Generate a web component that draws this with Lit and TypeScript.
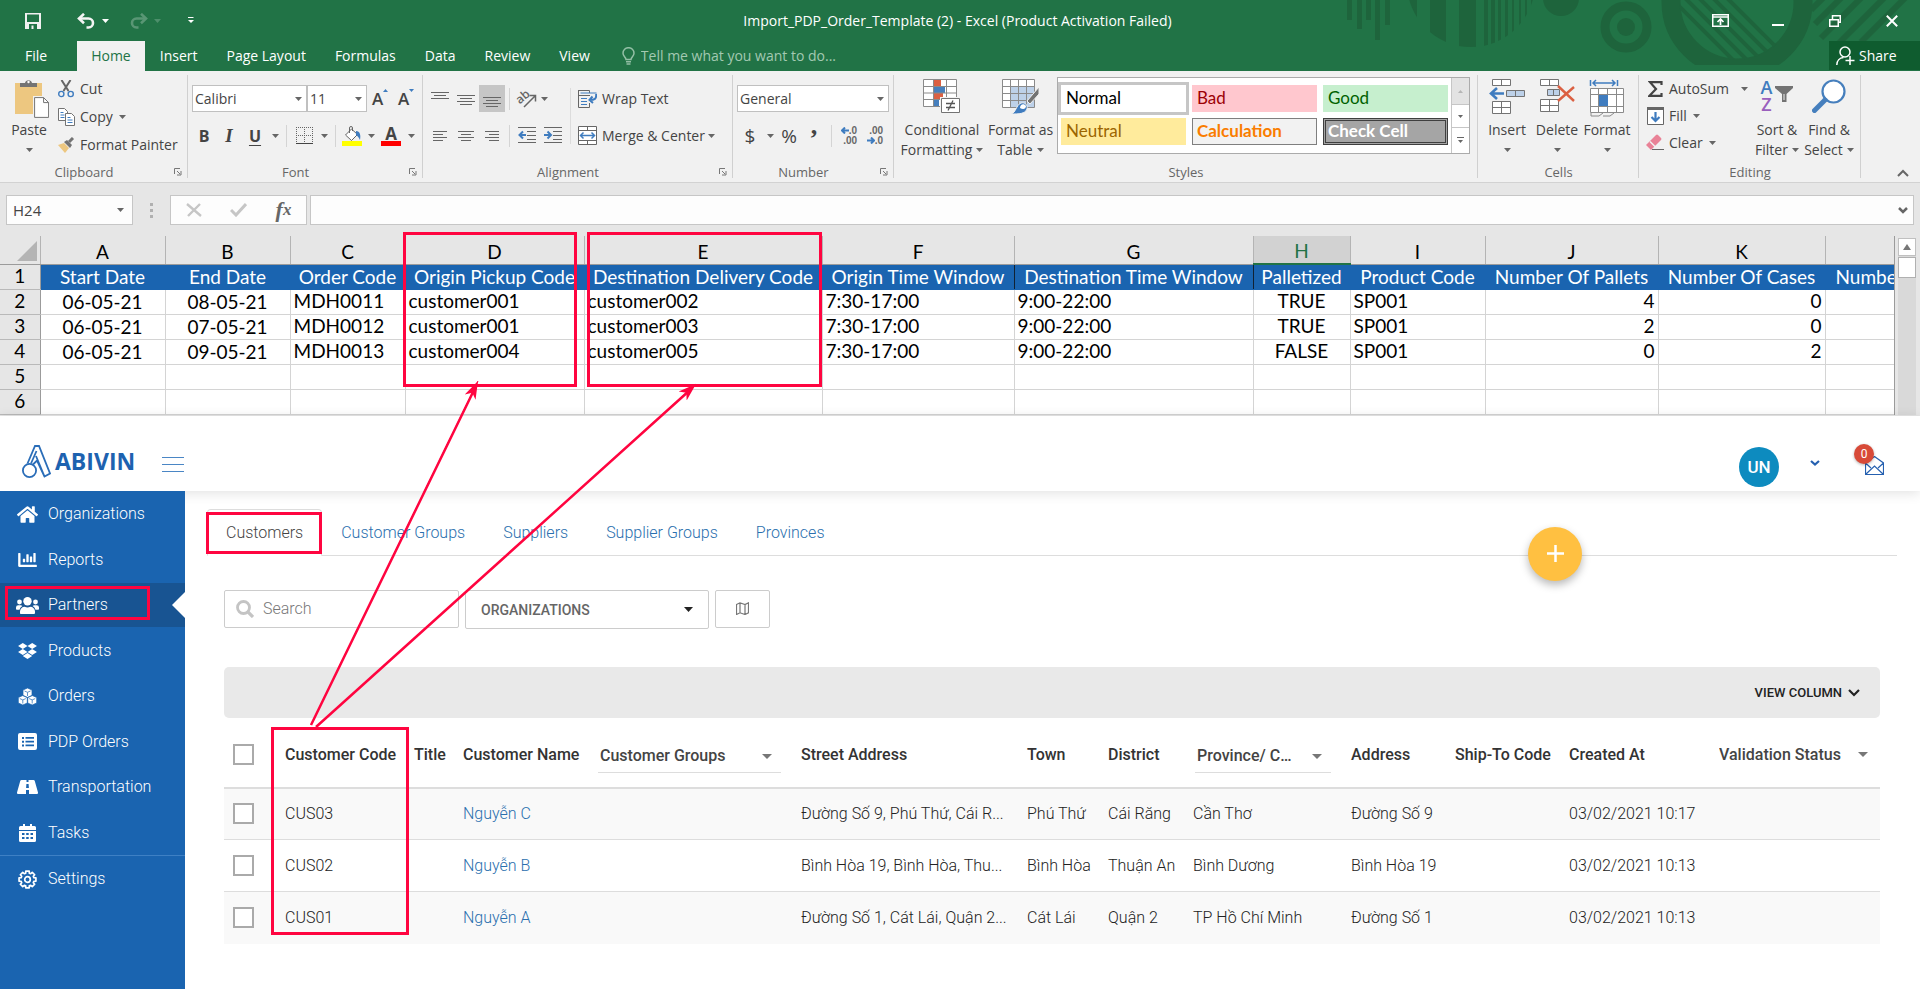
import { LitElement, html, css, svg, nothing } from "lit";
import { customElement } from "lit/decorators.js";
import { classMap } from "lit/directives/class-map.js";

/* ---------- shared pieces ---------- */

const reset = css`
  * { box-sizing: border-box; }
  button { border: 0; background: none; font: inherit; color: inherit; padding: 0; margin: 0; cursor: pointer; }
  input, select { font: inherit; color: inherit; margin: 0; }
  select { appearance: none; border-radius: 0; }
  ul { list-style: none; margin: 0; padding: 0; }
  a { color: inherit; text-decoration: none; }
  svg { display: block; flex: none; }
  table { border-collapse: collapse; border-spacing: 0; }
`;

const icon = (w: number, h: number, body: unknown, box = `0 0 ${w} ${h}`) =>
  html`<svg width=${w} height=${h} viewBox=${box} fill="none" aria-hidden="true">${body}</svg>`;

const caret = (color = "#666") =>
  icon(7, 4, svg`<path d="M0 0h7L3.5 4z" fill=${color} />`);

/* ---------- spreadsheet icons ---------- */

const lines = (rows: number[][]) =>
  svg`<path d=${rows.map(([x, y, w]) => `M${x} ${y}.5h${w}`).join("")} stroke="#666" />`;

const ic = {
  save: icon(16, 16, svg`<path d="M0 0h16v16H0z" fill="#f0f0f0"/><path d="M2 1.500h12v7.500h-12zM4 11h8v5H4z" fill="#217346"/><path d="M6.500 12.500h2V16h-2z" fill="#f0f0f0"/>`),
  undo: icon(19, 16, svg`<path d="M3 5.500h8.500a4.500 4.500 0 0 1 0 9h-2" stroke="#f4f4f4" stroke-width="2.600"/><path d="M7 .8 2 5.500l5 4.700" stroke="#f4f4f4" stroke-width="2.600"/>`),
  redo: icon(19, 16, svg`<g opacity=".25"><path d="M16 5.500H7.500a4.500 4.500 0 0 0 0 9h2" stroke="#fff" stroke-width="2.600"/><path d="m12 .8 5 4.700-5 4.700" stroke="#fff" stroke-width="2.600"/></g>`),
  custom: icon(7, 7, svg`<path d="M0 .5h5.500" stroke="#fff"/><path d="M0 3h6L3 6z" fill="#fff"/>`),
  ribbonOpt: icon(17, 13, svg`<path d="M.75.750h15.500v11.500H.750zM1 3h15" stroke="#fff" stroke-width="1.500"/><path d="M8.500 11V6M5.500 8l3-3 3 3" stroke="#fff" stroke-width="1.700"/>`),
  min: icon(12, 12, svg`<path d="M0 10h12" stroke="#fff" stroke-width="2"/>`),
  restore: icon(12, 12, svg`<path d="M.75 4.750h8.500v6.500H.750zM3.500 4.500V.750h7.750v6.500H9.500" stroke="#fff" stroke-width="1.500"/>`),
  close: icon(12, 12, svg`<path d="m.8.800 10.400 10.400M11.200.800.800 11.200" stroke="#fff" stroke-width="2"/>`),
  bulb: icon(13, 18, svg`<path d="M4 12.500c0-2-3-3.200-3-6.300a5.500 5.500 0 0 1 11 0c0 3.100-3 4.300-3 6.300z" stroke="#93bfa5" stroke-width="1.500"/><path d="M4 14.700h5M4.500 17h4" stroke="#93bfa5" stroke-width="1.500"/>`),
  share: icon(19, 20, svg`<circle cx="9" cy="6" r="5" stroke="#fff" stroke-width="1.500"/><path d="M.8 19c0-4.500 3-7.200 6.700-7.500M14 10v9M9.500 14.500h9" stroke="#fff" stroke-width="1.500"/>`),
  paste: icon(34, 39, svg`<path d="M0 4h27v31H0z" fill="#edc780"/><path d="M5 8V4h5a3.600 3.600 0 0 1 7 0h5v4z" fill="#737373"/><circle cx="13.500" cy="3" r="1.200" fill="#fff"/><path d="M18 17h17v22H18z" fill="#f1f1f1"/><path d="M19.600 18.600h9l5 5V38.400h-14z" fill="#fff" stroke="#737373"/><path d="M28.600 18.600v5h5" stroke="#737373"/>`),
  cut: icon(16, 18, svg`<path d="m3.500 0 7 11M12.500 0l-7 11" stroke="#666" stroke-width="2"/><circle cx="3.300" cy="14" r="2.600" stroke="#3f7cbf" stroke-width="1.400"/><circle cx="12.700" cy="14" r="2.600" stroke="#3f7cbf" stroke-width="1.400"/>`),
  copy: icon(17, 18, svg`<path d="M.5.500h6l3 3v9h-9z" fill="#fff" stroke="#737373"/><path d="M7.500 5.500h6l3 3v9h-9z" fill="#fff" stroke="#737373"/><path d="M2.500 4.500h3M2.500 7h4M2.500 9.500h4M9.500 9.500h3M9.500 12h5M9.500 14.500h5" stroke="#3f7cbf"/>`),
  brush: icon(17, 16, svg`<path d="m0 8 6-2 5 5-4 5z" fill="#edc780"/><path d="m6 5 3-2 5 5-2 3z" fill="#737373"/><path d="m11 5 4-4" stroke="#737373" stroke-width="3"/>`),
  launch: icon(8, 8, svg`<path d="M.5 6V.500H6" stroke="#777"/><path d="M3 3l3 3M7 3v4H3" stroke="#777"/>`),
  growTip: icon(5, 4, svg`<path d="M0 3h5L2.500 0z" fill="#3f7cbf"/>`),
  shrinkTip: icon(5, 4, svg`<path d="M0 0h5L2.500 3z" fill="#3f7cbf"/>`),
  borders: icon(17, 17, svg`<path d="M.5 0v16M8.500 0v16M16.500 0v16M0 .500h17M0 8.500h17" stroke="#666" stroke-dasharray="1 1"/><path d="M0 16.500h17" stroke="#444"/>`),
  fill: icon(20, 20, svg`<path d="m3.500 9 6-6 6 5.500-6 6z" fill="#fff" stroke="#666"/><path d="M7.500 7V2a1.500 1.500 0 0 1 3 0v3" stroke="#666"/><path d="M14 5c4 0 5 4 4 9-1-2-2-4-4-5z" fill="#3f7cbf"/><path d="M0 15h20v5H0z" fill="#ff0"/>`),
  alignTop: icon(18, 18, lines([[0, 2, 18], [3, 5, 12], [0, 8, 18]])),
  alignMid: icon(18, 18, lines([[0, 5, 18], [3, 8, 12], [0, 11, 18], [3, 14, 12]])),
  alignBot: icon(18, 18, lines([[0, 7, 18], [3, 10, 12], [0, 13, 18], [3, 16, 12]])),
  left: icon(14, 12, lines([[0, 1, 14], [0, 4, 10], [0, 7, 14], [0, 10, 10]])),
  center: icon(16, 12, lines([[0, 1, 16], [3, 4, 10], [0, 7, 16], [3, 10, 10]])),
  right: icon(14, 12, lines([[0, 1, 14], [4, 4, 10], [0, 7, 14], [4, 10, 10]])),
  outdent: icon(18, 17, svg`${lines([[0, 0, 18], [9, 4, 9], [9, 8, 9], [9, 12, 9], [0, 15, 18]])}<path d="M8 8H2M5 4.500 1.500 8 5 11.500" stroke="#3f7cbf" stroke-width="2"/>`),
  indent: icon(18, 17, svg`${lines([[0, 0, 18], [9, 4, 9], [9, 8, 9], [9, 12, 9], [0, 15, 18]])}<path d="M0 8h6M3.500 4.500 7 8l-3.500 3.500" stroke="#3f7cbf" stroke-width="2"/>`),
  wrap: icon(19, 18, svg`<path d="M.5 0v17.500h11V13M.5.500h11V3M0 5.500h12" stroke="#666"/><path d="M2.500 3h16M3 8.500h6M3 11.500h6M3 14.500h6" stroke="#3f7cbf"/><path d="M18 4c1 5-2 6-6 6M14.500 6.500 11.500 10l3.500 3" stroke="#3f7cbf" stroke-width="2"/>`),
  merge: icon(19, 19, svg`<path d="M.5.500h18v18H.500zM.5 4.500h18M.5 14.500h18M9.500.500v4M9.500 14.500v4" stroke="#666" fill="#fff"/><path d="M3 9.500h13M5.500 6.500l-3 3 3 3M13.500 6.500l3 3-3 3" stroke="#3f7cbf" stroke-width="1.500"/>`),
  arrowL: icon(8, 7, svg`<path d="M8 3.500H1M4 .5l-3 3 3 3" stroke="#3f7cbf" stroke-width="2"/>`),
  arrowR: icon(8, 7, svg`<path d="M0 3.500h7M4 .5l3 3-3 3" stroke="#3f7cbf" stroke-width="2"/>`),
  cond: icon(38, 36, svg`<path d="M.5.500h33v27H.500z" fill="#fff"/><path d="M11 1h7v6h-7zM11 14h9v7h-9z" fill="#db6042"/><path d="M11 7h11v7H11zM11 21h5v6h-5z" fill="#467fbd"/><path d="M.5.500h33v27H.500zM10.500 0v28M23.500 0v28M0 7.500h34M0 14h34M0 20.500h34" stroke="#8a8a8a"/><path d="M17 18h21v18H17z" fill="#f1f1f1"/><path d="M18.500 19.500h18v14h-18z" fill="#fff" stroke="#737373"/><path d="M23 24.500h9M23 28.500h9M30 21.500l-5 10" stroke="#555" stroke-width="1.300"/>`),
  tableFmt: icon(38, 36, svg`<path d="M.5.500h32v28H.500z" fill="#fff"/><path d="M8.500 7.500h24v21h-24z" fill="#bdd1e9"/><path d="M.5.500h32v28H.500zM8.500 0v28M16.500 0v28M24.500 0v28M0 7.500h32M0 14.500h32M0 21.500h32" stroke="#8a8a8a"/><path d="m25 22 12-14v7l-9 10z" fill="#737373" stroke="#f1f1f1"/><path d="M9 35c5-1 5-9 10-11 4-1 7 2 6 6-2 5-8 5-16 5z" fill="#3f7cbf" stroke="#f1f1f1"/><path d="M18 29c0-4 4-5 6-2 0 3-3 4-6 2z" fill="#fff"/>`),
  insert: icon(36, 36, svg`<path d="M3.500.500h18v6h-18zM12.500.500v6M3.500 22.500h18v12h-18zM12.500 22.500v12M3.500 28.500h18" fill="#fff" stroke="#737373"/><path d="M17.500 11.500h18v6h-18zM26.500 11.500v6" fill="#bdd1e9" stroke="#737373"/><path d="M15 14.500H2M8 9l-6 5.500L8 20" stroke="#3f7cbf" stroke-width="2.600"/>`),
  del: icon(36, 36, svg`<path d="M1.500.500h18v6h-18zM10.500.500v6M1.500 20.500h18v12h-18zM10.500 20.500v12M1.500 26.500h18" fill="#fff" stroke="#737373"/><path d="M8.500 10.500h12v6h-12zM14.500 10.500v6" fill="#bdd1e9" stroke="#737373"/><path d="m19 7 16 15M35 8 19 22" stroke="#db6042" stroke-width="2.400"/>`),
  format: icon(36, 38, svg`<path d="M1.500 1v6M28.500 1v6M4 4h22M7 1 4 4l3 3M23 1l3 3-3 3" stroke="#3f7cbf" stroke-width="1.500"/><path d="M1.500 9.500h33v24h-33z" fill="#fff"/><path d="M1.500 9.500h33v24h-33zM9.500 9v25M18.500 9v25M27.500 9v25M1 15.500h34M1 27.500h34M2 34v3h8l4-3M14 37h7l4-3" stroke="#8a8a8a"/><path d="M10 16h9v11h-9z" fill="#3f7cbf"/>`),
  sigma: icon(15, 16, svg`<path d="M13.500 4V1.200H2L8 8l-6.500 6.800h12V12" stroke="#444" stroke-width="2.200"/>`),
  down: icon(17, 18, svg`<path d="M.5.500h16v17H.500z" fill="#fff" stroke="#666"/><path d="M0 0h17v3H0z" fill="#666"/><path d="M8.500 5v9M4.500 10l4 4 4-4" stroke="#3f7cbf" stroke-width="2.200"/>`),
  clear: icon(19, 17, svg`<path d="m0 11 10-10q1-1 2 0l3 3q1 1 0 2L5 16z" fill="#e98297"/><path d="m4 7.500 6 6" stroke="#f1f1f1" stroke-width="1.500"/><path d="M6 15.500h12" stroke="#666"/>`),
  funnel: icon(18, 18, svg`<path d="M0 1h18v2l-6.500 6v8L7 17V9L0 3z" fill="#737373"/><path d="M9 9v6" stroke="#f1f1f1"/>`),
  find: icon(34, 34, svg`<circle cx="21.500" cy="12.500" r="11" fill="#fff" stroke="#467fbd" stroke-width="2.200"/><path d="M13 21 2.500 31.500" stroke="#467fbd" stroke-width="5" stroke-linecap="round"/>`),
  collapse: icon(12, 8, svg`<path d="m1 7 5-5 5 5" stroke="#666" stroke-width="2"/>`),
  cancel: icon(16, 14, svg`<path d="m1 1 14 12M14 1 2 13" stroke="#c6c6c6" stroke-width="2.400"/>`),
  enter: icon(17, 14, svg`<path d="m1 7 5 5L16 1" stroke="#c6c6c6" stroke-width="3"/>`),
  expand: icon(10, 7, svg`<path d="m1 1 4 4 4-4" stroke="#666" stroke-width="2.500"/>`),
  corner: icon(20, 20, svg`<path d="M20 0v20H0z" fill="#b4b4b4"/>`),
  up: icon(8, 6, svg`<path d="M0 6h8L4 0z" fill="#777"/>`),
};

type Cell = string;
const columns = [
  { id: "A", w: 125, title: "Start Date", align: "c low" },
  { id: "B", w: 125, title: "End Date", align: "c low" },
  { id: "C", w: 115, title: "Order Code", align: "l" },
  { id: "D", w: 179, title: "Origin Pickup Code", align: "l" },
  { id: "E", w: 238, title: "Destination Delivery Code", align: "l" },
  { id: "F", w: 192, title: "Origin Time Window", align: "l" },
  { id: "G", w: 239, title: "Destination Time Window", align: "l" },
  { id: "H", w: 97, title: "Palletized", align: "c" },
  { id: "I", w: 135, title: "Product Code", align: "l" },
  { id: "J", w: 173, title: "Number Of Pallets", align: "r" },
  { id: "K", w: 167, title: "Number Of Cases", align: "r" },
  { id: "", w: 70, title: "Number", align: "l" },
];
const rows: Cell[][] = [
  ["06-05-21", "08-05-21", "MDH0011", "customer001", "customer002", "7:30-17:00", "9:00-22:00", "TRUE", "SP001", "4", "0", ""],
  ["06-05-21", "07-05-21", "MDH0012", "customer001", "customer003", "7:30-17:00", "9:00-22:00", "TRUE", "SP001", "2", "0", ""],
  ["06-05-21", "09-05-21", "MDH0013", "customer004", "customer005", "7:30-17:00", "9:00-22:00", "FALSE", "SP001", "0", "2", ""],
  Array(12).fill(""),
  Array(12).fill(""),
];

@customElement("excel-window")
export class ExcelWindow extends LitElement {
  static styles = [reset, css`
    :host { display: block; position: relative; font: 14px/20px "Open Sans", "Noto Sans", sans-serif; color: #444; background: #e6e6e6; }
    .top { background: #217346; color: #fff; position: relative; }
    .art { position: absolute; right: 0; top: 0; }
    .title { position: relative; display: grid; grid-template-columns: 1fr auto 1fr; align-items: center; height: 41px; }
    .title h1 { font: inherit; margin: 0 5px 0 0; }
    .quick { display: flex; align-items: center; padding-left: 20px; }
    .quick button, .wins button { display: flex; align-items: center; justify-content: center; height: 38px; }
    .w26 { width: 26px; } .w24 { width: 24px; } .w14 { width: 14px; } .w8 { width: 8px; }
    .save { width: 26px; margin-right: 28px; }
    .redo { margin-left: 14px; }
    .more { width: 14px; margin-left: 20px; }
    .wins { display: flex; justify-content: flex-end; }
    .wins button { width: 57px; }
    .tabs { position: relative; display: flex; gap: 1px; height: 30px; align-items: stretch; }
    .tabs button { padding: 0 14px; }
    .tabs .file { padding: 0 29px 0 25px; }
    .tabs .on { background: #f1f1f1; color: #217346; }
    .tell { display: flex; align-items: center; gap: 6px; margin-left: 17px; flex: 1; }
    .tell input { border: 0; background: none; padding: 0; width: 240px; outline: 0; }
    .tell input::placeholder { color: #a3c9b2; opacity: 1; }
    .tabs .share { display: flex; align-items: center; gap: 4px; width: 91px; padding: 0 0 0 7px; background: #0f5c2f; height: 29px; }

    .ribbon { display: flex; height: 112px; background: #f1f1f1; border-bottom: 1px solid #d2d2d2; }
    .group { display: flex; flex-direction: column; flex: none; background: linear-gradient(#d0d0d0, #d0d0d0) right top 4px / 1px 103px no-repeat; }
    .body { flex: 1; display: flex; align-items: flex-start; }
    .foot { display: flex; align-items: center; height: 20px; font-size: 13px; line-height: 18px; color: #666; }
    .foot span { flex: 1; text-align: center; }
    .foot button { width: 20px; display: flex; justify-content: center; }
    .col { display: flex; flex-direction: column; gap: 10px; padding-top: 14px; }
    .list { display: flex; flex-direction: column; padding-top: 4px; }
    .list button { display: flex; align-items: center; gap: 6px; height: 28px; }
    .list.tight button { height: 27px; }
    .list .ico { width: 16px; display: flex; justify-content: center; }
    .row { display: flex; align-items: center; height: 27px; }
    .row button { display: flex; align-items: center; justify-content: center; height: 27px; flex: none; }
    .row .on { background: #c6c6c6; }
    .row .text { gap: 5px; }
    .sep { width: 1px; height: 22px; background: #d4d4d4; margin: 0 4px; flex: none; }
    .vsep { width: 1px; height: 56px; background: #dcdcdc; margin: 17px 7px 0 4px; }
    .big { display: flex; flex-direction: column; align-items: center; padding-top: 6px; flex: none; }
    .big .ico { height: 43px; display: flex; align-items: flex-start; padding-top: 2px; }
    .big .ln { display: flex; align-items: center; gap: 4px; height: 20px; }
    .paste .ico { padding-left: 5px; }
    .turn svg { overflow: visible; }
    .combo { display: grid; height: 27px; flex: none; }
    .combo > * { grid-area: 1 / 1; }
    .combo select { background: #fff; border: 1px solid #c0c0c0; padding: 0 18px 0 2px; height: 27px; width: 100%; }
    .combo svg { place-self: center end; margin-right: 5px; pointer-events: none; }
    .strong { font-weight: 700; font-size: 16px; }
    .row .comma { align-items: flex-start; font: 700 26px/8px "Liberation Serif", serif; }
    .ital { font-family: "Liberation Serif", serif; font-style: italic; font-weight: 700; font-size: 19px; }
    .under { font-weight: 700; font-size: 16px; text-decoration: underline; text-underline-offset: 3px; text-decoration-thickness: 1px; }
    .letter { font-weight: 600; font-size: 17px; }
    .letter svg { align-self: flex-start; margin-top: 4px; }
    .colour { font-weight: 700; font-size: 17px; line-height: 15px; border-bottom: 5px solid #f00; width: 20px; }
    .sym { font-size: 19px; }
    .dec { display: grid; grid-template-columns: auto auto; align-items: center; font: 700 10px/10px "Liberation Sans", sans-serif; justify-items: end; color: #666; }
    .dec .wide { grid-column: 1 / 3; }
    .gallery { display: flex; border: 1px solid #ababab; background: #fff; margin-top: 6px; height: 77px; }
    .cards { display: grid; grid-template-columns: repeat(3, 125px); grid-auto-rows: 27px; gap: 6px; padding: 7px 3px 0; font: 17px/20px Lato, sans-serif; }
    .cards button { text-align: left; padding: 0 0 1px 5px; }
    .normal { color: #000; background: #fff; outline: 3px solid #c6c6c6; }
    .bad { background: #ffc7ce; color: #9c0006; }
    .good { background: #c6efce; color: #006100; }
    .neutral { background: #ffeb9c; color: #9c6500; }
    .cards .calc { background: #f2f2f2; border: 1px solid #7f7f7f; color: #fa7d00; font-weight: 700; padding-left: 4px; }
    .cards .check { background: #a5a5a5; border: 3px double #3f3f3f; color: #fff; font-weight: 700; padding-left: 2px; }
    .scroll3 { display: grid; grid-template-rows: 26px 23px 1fr; width: 18px; border-left: 1px solid #c6c6c6; }
    .scroll3 button { display: flex; flex-direction: column; gap: 2px; align-items: center; justify-content: center; border-top: 1px solid #c6c6c6; }
    .scroll3 .dim { background: #e3e3e3; border-top: 0; }
    .az { display: grid; font: 18px/17px "Open Sans", sans-serif; font-weight: 600; margin-right: 3px; height: 34px; }
    .az span:first-child { color: #3f7cbf; }
    .az span:last-child { color: #9a5fbd; }
    .filter .ico svg { margin-top: 6px; }
    .hide { margin: auto 11px 5px auto; }

    .fbar { display: flex; align-items: center; padding: 12px 6px 11px; height: 53px; }
    .box { display: flex; align-items: center; background: #fdfdfd; border: 1px solid #c6c6c6; height: 30px; }
    .name { width: 127px; padding: 0 8px 0 6px; font-size: 15px; }
    .box input { border: 0; background: none; outline: 0; flex: 1; min-width: 0; padding: 0; }
    .dots { width: 3px; margin: 0 17px; display: grid; gap: 3px; }
    .dots i { width: 3px; height: 3px; background: #b0b0b0; }
    .tools { width: 137px; justify-content: space-around; margin-right: 3px; }
    .tools button { width: 45px; display: flex; justify-content: center; }
    .fx { font: italic 700 22px/22px "Liberation Serif", serif; color: #666; }
    .fx small { font-size: 17px; }
    .formula { flex: 1; padding: 0 5px; }

    .sheet { display: flex; padding-bottom: 1px; }
    .grid { flex: 1; min-width: 0; overflow: hidden; border-right: 1px solid #9b9b9b; background: #fff; }
    .grid table { table-layout: fixed; width: 100%; font: 19px/22px Lato, sans-serif; color: #000; }
    .grid th, .grid td { font-weight: 400; padding: 0 3px 2px; white-space: nowrap; overflow: hidden; height: 25px; border-right: 1px solid #d4d4d4; border-bottom: 1px solid #d4d4d4; }
    .grid .low { padding-bottom: 0; }
    .grid thead th { height: 28px; background: #e6e6e6; border-right-color: #b4b4b4; border-bottom-color: #9b9b9b; vertical-align: bottom; padding-bottom: 1px; }
    .grid thead .sel { background: #d2d2d2; color: #217346; border-bottom: 2px solid #217346; }
    .grid thead .corner { padding: 0 3px 3px; }
    .corner svg { margin-left: auto; }
    .grid tbody th { background: #e6e6e6; border-right-color: #9b9b9b; border-bottom-color: #b9b9b9; }
    .grid .head td { background: #1a64b0; color: #fff; border-color: #1a64b0; text-align: center; padding: 1px 0 0; text-overflow: clip; }
    .grid .head .mark { border-right-color: #123; }
    .grid .head .cut { text-align: left; padding-left: 10px; }
    .c { text-align: center; } .r { text-align: right; } .l { text-align: left; }
    .bar { width: 25px; padding: 2px 4px 0 3px; display: flex; flex-direction: column; }
    .bar .step { height: 18px; background: #fff; border: 1px solid #c0c0c0; display: flex; align-items: center; justify-content: center; }
    .track { flex: 1; background: #d9d9d9; padding-top: 1px; }
    .thumb { height: 21px; background: #fff; border: 1px solid #b0b0b0; }
  `];

  private art() {
    const stripes = [[60, 12], [85, 16], [114, 17], [139, 4], [146, 4], [153, 3], [160, 3], [167, 2], [174, 2], [180, 2], [186, 2]];
    return html`<svg class="art" width="575" height="71" viewBox="0 0 575 71" fill="#1e643c" aria-hidden="true">
      <defs>
        <clipPath id="disc"><circle cx="126" cy="-17" r="64" /></clipPath>
        <clipPath id="hole"><circle cx="392" cy="2" r="58" /></clipPath>
        <clipPath id="cut"><rect width="575" height="65" /></clipPath>
      </defs>
      <path d="M2 0h5v20H2zM12 0h5v29h-5zM21 0h5v20h-5zM30 0h5v40h-5zM40 0h5v25h-5z" />
      <g clip-path="url(#disc)">${stripes.map(([x, w]) => svg`<rect x=${x} width=${w} height="60" />`)}</g>
      <circle cx="216" cy="-2" r="18" />
      <circle cx="281" cy="27" r="21" fill="none" stroke="#1e643c" stroke-width="9" />
      <circle cx="281" cy="27" r="9" />
      <circle cx="392" cy="2" r="66" fill="none" stroke="#1e643c" stroke-width="19" clip-path="url(#cut)" />
      <g clip-path="url(#hole)" stroke="#1e643c" stroke-width="4">
        <path d="M322-6l80 80M332-10l80 80M342-14l80 80M352-18l80 80M362-22l90 90" />
      </g>
      <path d="M480-4l-14 14M500-6l-30 30M520-6l-44 44M545-8l-54 54M566-8l-50 50" stroke="#1e643c" stroke-width="6" />
    </svg>`;
  }

  private big(w: number, pic: unknown, a: string, b = "", cls = "") {
    return html`<button class="big ${cls}" style="width:${w}px">
      <span class="ico">${pic}</span><span class="ln">${a}</span><span class="ln">${b ? html`<span>${b}</span>` : nothing}${caret()}</span>
    </button>`;
  }

  private group(label: string, body: unknown, width: number, launcher = true) {
    return html`<section class="group" style="width:${width}px" aria-label=${label}>
      <div class="body">${body}</div>
      <div class="foot"><span>${label}</span>${launcher ? html`<button aria-label="${label} settings">${ic.launch}</button>` : nothing}</div>
    </section>`;
  }

  private drop = (label: string) => html`<button class="w14" aria-label=${label}>${caret()}</button>`;

  render() {
    const menu = ["Insert", "Page Layout", "Formulas", "Data", "Review", "View"];
    return html`
      <header class="top">
        ${this.art()}
        <div class="title">
          <div class="quick">
            <button class="save" aria-label="Save">${ic.save}</button>
            <button class="w24" aria-label="Undo">${ic.undo}</button>
            <button class="w14" aria-label="Undo list">${caret("#fff")}</button>
            <button class="w24 redo" aria-label="Redo">${ic.redo}</button>
            <button class="w14" aria-label="Redo list">${caret("#4d8f6b")}</button>
            <button class="more" aria-label="Customize toolbar">${ic.custom}</button>
          </div>
          <h1>Import_PDP_Order_Template (2) - Excel (Product Activation Failed)</h1>
          <div class="wins">
            <button aria-label="Ribbon display options">${ic.ribbonOpt}</button>
            <button aria-label="Minimize">${ic.min}</button>
            <button aria-label="Restore">${ic.restore}</button>
            <button aria-label="Close">${ic.close}</button>
          </div>
        </div>
        <nav class="tabs">
          <button class="file">File</button>
          <button class="on">Home</button>
          ${menu.map((m) => html`<button>${m}</button>`)}
          <label class="tell">${ic.bulb}<input aria-label="Tell me" placeholder="Tell me what you want to do..." /></label>
          <button class="share">${ic.share}Share</button>
        </nav>
      </header>

      <div class="ribbon">
        ${this.group("Clipboard", html`
          ${this.big(58, ic.paste, "Paste", "", "paste")}
          <div class="list">
            <button><span class="ico">${ic.cut}</span>Cut</button>
            <button><span class="ico">${ic.copy}</span>Copy <span>${caret()}</span></button>
            <button><span class="ico">${ic.brush}</span>Format Painter</button>
          </div>`, 188)}
        ${this.group("Font", html`
          <div class="col" style="padding-left:4px">
            <div class="row">
              <span class="combo" style="width:115px"><select aria-label="Font"><option>Calibri</option></select>${caret()}</span>
              <span class="combo" style="width:60px"><select aria-label="Font size"><option>11</option></select>${caret()}</span>
              <button class="w26 letter" aria-label="Increase font size">A${ic.growTip}</button>
              <button class="w26 letter" aria-label="Decrease font size">A${ic.shrinkTip}</button>
            </div>
            <div class="row">
              <button class="w24 strong">B</button>
              <button class="w26 ital">I</button>
              <button class="w26 under">U</button>
              ${this.drop("Underline styles")}
              <i class="sep"></i>
              <button class="w26" aria-label="Borders">${ic.borders}</button>
              ${this.drop("Border styles")}
              <i class="sep"></i>
              <button class="w24" aria-label="Fill colour">${ic.fill}</button>
              ${this.drop("Fill colours")}
              <button class="w26"><span class="colour">A</span></button>
              ${this.drop("Font colours")}
            </div>
          </div>`, 235)}
        ${this.group("Alignment", html`
          <div class="col" style="padding-left:4px">
            <div class="row">
              <button class="w26" aria-label="Top align">${ic.alignTop}</button>
              <button class="w26" aria-label="Middle align">${ic.alignMid}</button>
              <button class="w26 on" aria-label="Bottom align">${ic.alignBot}</button>
              <i class="sep"></i>
              <button class="w26 turn" aria-label="Orientation">
                <svg width="20" height="19" viewBox="0 0 20 19" fill="none"><text x="0" y="12" font-size="12" font-weight="600" fill="#666" transform="rotate(-40 6 10)">ab</text><path d="M7 18 18 7M12.500 6.500h6v6" stroke="#666" stroke-width="1.500"/></svg>
              </button>
              <button class="w8" aria-label="Orientations">${caret()}</button>
            </div>
            <div class="row">
              <button class="w26" aria-label="Align left">${ic.left}</button>
              <button class="w26" aria-label="Center">${ic.center}</button>
              <button class="w26" aria-label="Align right">${ic.right}</button>
              <i class="sep"></i>
              <button class="w26" aria-label="Decrease indent">${ic.outdent}</button>
              <button class="w26" aria-label="Increase indent">${ic.indent}</button>
            </div>
          </div>
          <i class="vsep"></i>
          <div class="col">
            <div class="row"><button class="text">${ic.wrap}Wrap Text</button></div>
            <div class="row"><button class="text">${ic.merge}Merge &amp; Center</button>${this.drop("Merge options")}</div>
          </div>`, 310)}
        ${this.group("Number", html`
          <div class="col" style="padding-left:4px">
            <div class="row"><span class="combo" style="width:152px"><select aria-label="Number format"><option>General</option></select>${caret()}</span></div>
            <div class="row">
              <button class="w26 sym">$</button>
              ${this.drop("Currencies")}
              <button class="w24 sym">%</button>
              <button class="w26 comma">,</button>
              <i class="sep"></i>
              <button class="w26" aria-label="Increase decimal"><span class="dec">${ic.arrowL}<span>.0</span><span class="wide">.00</span></span></button>
              <button class="w26" aria-label="Decrease decimal"><span class="dec"><span class="wide">.00</span>${ic.arrowR}<span>.0</span></span></button>
            </div>
          </div>`, 161)}
        ${this.group("Styles", html`
          <div class="body" style="padding-left:6px">
            ${this.big(84, ic.cond, "Conditional", "Formatting")}
            ${this.big(73, ic.tableFmt, "Format as", "Table")}
            <div class="gallery">
              <div class="cards">
                <button class="normal">Normal</button><button class="bad">Bad</button><button class="good">Good</button>
                <button class="neutral">Neutral</button><button class="calc">Calculation</button><button class="check">Check Cell</button>
              </div>
              <div class="scroll3">
                <button class="dim" aria-label="Previous styles">${icon(5, 3, svg`<path d="M0 3h5L2.500 0z" fill="#b5b5b5"/>`)}</button>
                <button aria-label="Next styles">${icon(5, 3, svg`<path d="M0 0h5L2.500 3z" fill="#666"/>`)}</button>
                <button aria-label="All styles">${icon(7, 7, svg`<path d="M0 .5h7" stroke="#666"/><path d="M1 3h5L3.500 6z" fill="#666"/>`)}</button>
              </div>
            </div>
          </div>`, 584, false)}
        ${this.group("Cells", html`
          <div class="body" style="padding-left:4px">
            ${this.big(50, ic.insert, "Insert")}${this.big(50, ic.del, "Delete")}${this.big(50, ic.format, "Format")}
          </div>`, 161, false)}
        ${this.group("Editing", html`
          <div class="list tight" style="padding-left:8px;width:113px">
            <button><span class="ico">${ic.sigma}</span>AutoSum <span style="margin-left:6px">${caret()}</span></button>
            <button><span class="ico">${ic.down}</span>Fill <span>${caret()}</span></button>
            <button><span class="ico">${ic.clear}</span>Clear <span>${caret()}</span></button>
          </div>
          ${this.big(50, html`<span class="az"><span>A</span><span>Z</span></span>${ic.funnel}`, "Sort &", "Filter", "filter")}
          ${this.big(54, ic.find, "Find &", "Select")}`, 222, false)}
        <button class="hide" aria-label="Collapse ribbon">${ic.collapse}</button>
      </div>

      <div class="fbar">
        <div class="box name"><input aria-label="Name box" value="H24" />${caret()}</div>
        <span class="dots"><i></i><i></i><i></i></span>
        <div class="box tools">
          <button aria-label="Cancel">${ic.cancel}</button>
          <button aria-label="Enter">${ic.enter}</button>
          <button class="fx" aria-label="Insert function">f<small>x</small></button>
        </div>
        <div class="box formula"><input aria-label="Formula" /><button aria-label="Expand formula bar">${ic.expand}</button></div>
      </div>

      <div class="sheet">
        <div class="grid">
          <table>
            <colgroup><col style="width:40px" />${columns.map((c) => html`<col style="width:${c.w}px" />`)}</colgroup>
            <thead><tr><th class="corner">${ic.corner}</th>${columns.map((c) => html`<th class=${c.id === "H" ? "sel" : ""}>${c.id}</th>`)}</tr></thead>
            <tbody>
              <tr class="head"><th>1</th>${columns.map((c) => html`<td class=${classMap({ mark: c.id === "F" || c.id === "G", cut: !c.id })}>${c.title}</td>`)}</tr>
              ${rows.map((r, i) => html`<tr><th>${i + 2}</th>${r.map((v, k) => html`<td class=${columns[k].align}>${v}</td>`)}</tr>`)}
            </tbody>
          </table>
        </div>
        <div class="bar"><button class="step" aria-label="Scroll up">${ic.up}</button><div class="track"><div class="thumb"></div></div></div>
      </div>`;
  }
}

/* ---------- partners application ---------- */

const fa = (box: string, d: string, w = 19, h = 17) =>
  html`<svg width=${w} height=${h} viewBox=${box} fill="#fff" fill-rule="evenodd" aria-hidden="true"><path d=${d} /></svg>`;

const side = [
  { label: "Organizations", pic: fa("0 32 576 448", "M280.370 148.260L96 300.110V464a16 16 0 0 0 16 16l112.060-.29a16 16 0 0 0 15.920-16V368a16 16 0 0 1 16-16h64a16 16 0 0 1 16 16v95.640a16 16 0 0 0 16 16.050L464 480a16 16 0 0 0 16-16V300L295.670 148.260a12.190 12.190 0 0 0-15.300 0zM571.600 251.470L488 182.560V44.050a12 12 0 0 0-12-12h-56a12 12 0 0 0-12 12v72.610L318.470 43a48 48 0 0 0-61 0L4.340 251.470a12 12 0 0 0-1.600 16.900l25.500 31A12 12 0 0 0 45.150 301l235.220-193.740a12.190 12.190 0 0 1 15.300 0L530.900 301a12 12 0 0 0 16.900-1.600l25.500-31a12 12 0 0 0-1.700-16.930z", 21, 17) },
  { label: "Reports", pic: fa("0 64 512 384", "M332.800 320h38.400c6.400 0 12.800-6.400 12.800-12.800V172.800c0-6.400-6.400-12.800-12.800-12.800h-38.400c-6.400 0-12.800 6.400-12.800 12.800v134.400c0 6.400 6.400 12.800 12.800 12.800zm96 0h38.400c6.400 0 12.800-6.400 12.800-12.800V76.800c0-6.400-6.400-12.800-12.800-12.800h-38.400c-6.400 0-12.800 6.400-12.800 12.800v230.400c0 6.400 6.400 12.800 12.800 12.800zm-288 0h38.400c6.400 0 12.800-6.400 12.800-12.800v-70.400c0-6.400-6.400-12.800-12.800-12.800h-38.400c-6.400 0-12.800 6.400-12.800 12.800v70.400c0 6.400 6.400 12.800 12.800 12.800zm96 0h38.400c6.400 0 12.800-6.400 12.800-12.800V108.800c0-6.400-6.400-12.800-12.800-12.800h-38.400c-6.400 0-12.800 6.400-12.800 12.800v198.400c0 6.400 6.400 12.800 12.800 12.800zM496 384H64V80c0-8.840-7.160-16-16-16H16C7.160 64 0 71.160 0 80v336c0 17.670 14.330 32 32 32h464c8.840 0 16-7.160 16-16v-32c0-8.840-7.160-16-16-16z", 19, 14) },
  { label: "Partners", pic: html`<svg width="23" height="17" viewBox="0 0 23 17" fill="#fff" aria-hidden="true"><circle cx="11.500" cy="4.200" r="4.200"/><circle cx="3.500" cy="5" r="2.400"/><circle cx="19.500" cy="5" r="2.400"/><path d="M4.500 17a1 1 0 0 1-.5-1v-1.500a4.700 4.700 0 0 1 4.700-4.700q2.800 1.200 5.600 0a4.700 4.700 0 0 1 4.700 4.700V16a1 1 0 0 1-1 1zM0 12V10.500A2.300 2.300 0 0 1 2.300 8.200h2.400q1 0 1.700.8A6 6 0 0 0 3.500 12.700H.800A.8.800 0 0 1 0 12zM23 12v-1.500a2.300 2.300 0 0 0-2.300-2.300h-2.400q-1 0-1.700.8a6 6 0 0 1 2.900 3.700h2.700a.8.800 0 0 0 .8-.7z"/></svg>` },
  { label: "Products", pic: fa("0 32 528 448", "M264.400 116.300l-132 84.300 132 84.300-132 84.300L0 284.100l132.300-84.300L0 116.300 132.300 32l132.100 84.300zM131.600 395.700l132-84.300 132 84.300-132 84.300-132-84.300zm132.800-111.600l132-84.300-132-83.600L395.700 32 528 116.300l-132.300 84.300L528 284.800l-132.300 84.300-131.300-85z", 19, 16) },
  { label: "Orders", pic: html`<svg width="19" height="17" viewBox="0 0 19 17" fill="#fff" stroke="#1a64b0" stroke-width=".7" stroke-linejoin="round" aria-hidden="true"><path d="M9.500 0 14 2v5.500l-4.500 2-4.500-2V2zM4.800 7.500l4.500 2V15l-4.500 2-4.500-2V9.500zM14.200 7.500l4.500 2V15l-4.500 2-4.500-2V9.500z"/><path d="M6.500 3l3 1.300 3-1.300M9.500 4.500V8M1.800 10.600l3 1.300 3-1.300M4.800 12v3.500M11.200 10.600l3 1.300 3-1.300M14.200 12v3.500" fill="none"/></svg>` },
  { label: "PDP Orders", pic: fa("0 0 19 17", "M2 0h15a2 2 0 0 1 2 2v13a2 2 0 0 1-2 2H2a2 2 0 0 1-2-2V2a2 2 0 0 1 2-2zM4 4v2h2V4zM7.500 4v1.800H16V4zM4 7.700v2h2v-2zM7.500 7.700v1.800H16V7.700zM4 11.400v2h2v-2zM7.500 11.400v1.800H16v-1.800z", 19, 17) },
  { label: "Transportation", pic: fa("0 0 21 14", "M4.500 0h5v2h2V0h5c.6 0 1 .3 1.200.8L21 12.500c.2.800-.2 1.500-1 1.500h-8v-4H9v4H1c-.8 0-1.200-.7-1-1.500L3.300.8C3.500.3 3.900 0 4.500 0zM9.400 4l-.3 4h2.800l-.3-4z", 21, 14) },
  { label: "Tasks", pic: fa("0 0 17 18", "M4 0h2v2h5V0h2v2h2.500A1.500 1.500 0 0 1 17 3.500V6H0V3.500A1.500 1.500 0 0 1 1.500 2H4zM0 7h17v9.500a1.500 1.500 0 0 1-1.500 1.500h-14A1.500 1.500 0 0 1 0 16.500zM3 9v2h2.500V9zM7.200 9v2h2.500V9zM11.500 9v2H14V9zM3 13v2h2.500v-2zM7.200 13v2h2.500v-2zM11.500 13v2H14v-2z", 17, 18) },
];

const gear = (() => {
  const pts: string[] = [];
  for (let i = 0; i < 8; i++) {
    const a = (i * Math.PI) / 4;
    for (const [da, r] of [[-0.28, 6.6], [-0.2, 8.6], [0.2, 8.6], [0.28, 6.6]]) {
      pts.push(`${(9.5 + r * Math.cos(a + da)).toFixed(2)} ${(9.5 + r * Math.sin(a + da)).toFixed(2)}`);
    }
  }
  return html`<svg width="19" height="19" viewBox="0 0 19 19" fill="none" stroke="#fff" stroke-width="1.700" stroke-linejoin="round" aria-hidden="true"><path d="M${pts.join("L")}Z"/><circle cx="9.500" cy="9.500" r="2.800"/></svg>`;
})();

const customers = [
  ["CUS03", "Nguyễn C", "Đường Số 9, Phú Thứ, Cái R...", "Phú Thứ", "Cái Răng", "Cần Thơ", "Đường Số 9", "03/02/2021 10:17"],
  ["CUS02", "Nguyễn B", "Bình Hòa 19, Bình Hòa, Thu...", "Bình Hòa", "Thuận An", "Bình Dương", "Bình Hòa 19", "03/02/2021 10:13"],
  ["CUS01", "Nguyễn A", "Đường Số 1, Cát Lái, Quận 2...", "Cát Lái", "Quận 2", "TP Hồ Chí Minh", "Đường Số 1", "03/02/2021 10:13"],
];

@customElement("partners-app")
export class PartnersApp extends LitElement {
  static styles = [reset, css`
    :host { display: flex; flex-direction: column; flex: 1; font: 300 16px/20px Roboto, sans-serif; color: #222; background: #fff; }
    .head { display: flex; align-items: center; height: 75px; padding: 0 36px 0 22px; position: relative; box-shadow: 0 2px 12px rgba(0, 0, 0, .12); }
    .brand { display: flex; align-items: center; gap: 4px; width: 140px; margin-top: 16px; color: #1d62b0; font: 700 23px/32px "Open Sans", sans-serif; }
    .burger { width: 22px; height: 15px; border-top: 1px solid #4a86c5; border-bottom: 1px solid #4a86c5; display: grid; align-items: center; align-self: flex-start; margin-top: 41px; }
    .burger i { height: 1px; background: #4a86c5; }
    .me { margin: 28px 0 0 auto; display: grid; place-items: center; width: 40px; height: 40px; border-radius: 50%; background: #0d8bbf; color: #fff; font-weight: 500; font-size: 17px; }
    .chev { margin: 19px 45px 0 31px; }
    .mail { position: relative; margin-top: 24px; }
    .badge { position: absolute; left: -11px; top: -12px; width: 20px; height: 20px; border-radius: 50%; background: #d84a38; color: #fff; font-size: 12px; font-weight: 400; line-height: 20px; text-align: center; box-shadow: 0 1px 3px rgba(0, 0, 0, .3); }
    .main { flex: 1; display: flex; }
    .side { width: 185px; background: #1a64b0; color: #fff; flex: none; position: relative; }
    .side ul { display: grid; grid-auto-rows: 1fr; height: 364px; }
    .side a { display: flex; align-items: center; height: 100%; padding: 2px 0 0 16px; gap: 9px; }
    .side a span { width: 23px; display: flex; justify-content: center; }
    .side .on { background: linear-gradient(#185492, #185492) 0 1px / 100% 44px no-repeat; position: relative; }
    .side .on::after { content: ""; margin-left: auto; border: 13px solid transparent; border-left: 0; border-right-color: #fff; }
    .settings { border-top: 1px solid #3e80c4; height: 46px; }
    .content { flex: 1; min-width: 0; position: relative; padding: 18px 23px 0 22px; }
    .tabs { display: flex; border-bottom: 1px solid #ddd; height: 47px; }
    .tabs a { display: block; padding: 13px 18px; border: 1px solid transparent; color: #2a6fae; height: 47px; }
    .tabs .on { color: #444; border-color: #ddd; border-bottom-color: #fff; border-radius: 4px 4px 0 0; }
    .fab { position: absolute; right: 338px; top: 36px; width: 54px; height: 54px; border-radius: 50%; background: #ffc041; display: grid; place-items: center; box-shadow: 0 4px 8px rgba(0, 0, 0, .28); }
    .inner { padding: 34px 17px 0; }
    .filters { display: flex; align-items: flex-start; gap: 6px; }
    .filters > * { border: 1px solid #ccc; border-radius: 2px; height: 38px; }
    .search { display: flex; align-items: center; gap: 9px; width: 235px; padding-left: 11px; }
    .search input { border: 0; outline: 0; width: 100%; padding: 0; background: none; }
    .search input::placeholder { color: #777; opacity: 1; }
    .pick { display: grid; }
    .pick > * { grid-area: 1 / 1; }
    .pick svg { place-self: center end; pointer-events: none; }
    .org { width: 244px; height: 39px; font-size: 14px; font-weight: 500; color: #666; }
    .org select { border: 0; background: none; padding: 2px 40px 0 15px; }
    .org svg { margin-right: 15px; }
    .map { width: 55px; display: grid; place-items: center; }
    .strip { margin-top: 38px; height: 51px; background: #e9e9e9; border-radius: 5px; display: flex; justify-content: flex-end; align-items: center; padding: 2px 20px 0 0; }
    .strip button { display: flex; align-items: center; gap: 6px; font-size: 13px; font-weight: 500; color: #222; }
    .list { table-layout: fixed; width: 100%; }
    .list th, .list td { text-align: left; padding: 0 8px; white-space: nowrap; overflow: hidden; }
    .list th { height: 70px; font-weight: 500; padding-top: 5px; border-bottom: 2px solid #ddd; color: #333; }
    .list td { height: 52px; border-top: 1px solid #ddd; }
    .list tbody tr:nth-child(odd) { background: #f9f9f9; }
    .list .link { color: #2a6fae; }
    .list input { appearance: none; display: block; width: 21px; height: 21px; border: 2px solid #aaa; margin: 0 0 0 1px; background: #fff; }
    .under { border-bottom: 1px solid #ddd; height: 37px; margin-right: 4px; }
    .under.inset { margin-left: 2px; }
    .list .pick select { border: 0; background: none; padding: 4px 38px 0 2px; font-weight: 500; width: 100%; text-overflow: ellipsis; overflow: hidden; color: #444; outline: 0; }
    .list .pick svg { margin: 4px 9px 0 0; }
    .list .status { padding-right: 0; }
    .list .status .pick select { padding: 0 30px 0 0; }
    .list .status .pick svg { margin: 0 12px 0 0; }
  `];

  private column(label: string, cls = "under") {
    return html`<label class="pick ${cls}"><select aria-label=${label}><option>${label}</option></select>${icon(10, 5, svg`<path d="M0 0h10L5 5z" fill="#777"/>`)}</label>`;
  }

  render() {
    const widths = [53, 129, 49, 135, 203, 226, 81, 85, 158, 104, 114, 150, 169];
    const tabs = ["Customers", "Customer Groups", "Suppliers", "Supplier Groups", "Provinces"];
    return html`
      <header class="head">
        <a class="brand" href="#">
          <svg width="29" height="33" viewBox="0 0 29 33" fill="none" stroke="#2a6db8" stroke-width="1.800" aria-hidden="true">
            <circle cx="7.500" cy="25.500" r="6.600"/><path d="M5.500 18.500 13 1h4l11 27.500-5.500 3L14 11M9 18.500 14.500 6M22.500 31.500 15 15.500l-4 4"/>
          </svg>ABIVIN</a>
        <button class="burger" aria-label="Toggle menu"><i></i></button>
        <button class="me">UN</button>
        <button class="chev" aria-label="Account menu">${icon(10, 6, svg`<path d="m1 1 4 3.500L9 1" stroke="#2560b0" stroke-width="2.200"/>`)}</button>
        <button class="mail" aria-label="Messages">
          ${icon(19, 19, svg`<path d="M.5 7v11.500h18V7L9.500.500zM.5 7l5.500 5M18.500 7 13 12M.5 18.500l9-8.500 9 8.500" stroke="#2560b0" stroke-width="1.200"/>`)}
          <span class="badge">0</span>
        </button>
      </header>
      <div class="main">
        <nav class="side">
          <ul>${side.map((s) => html`<li><a href="#" class=${s.label === "Partners" ? "on" : ""}><span>${s.pic}</span>${s.label}</a></li>`)}</ul>
          <div class="settings"><a href="#"><span>${gear}</span>Settings</a></div>
        </nav>
        <main class="content">
          <nav class="tabs">${tabs.map((t, i) => html`<a href="#" class=${i ? "" : "on"}>${t}</a>`)}</nav>
          <button class="fab" aria-label="Add customer">${icon(17, 17, svg`<path d="M8.500 0v17M0 8.500h17" stroke="#fff" stroke-width="2.500"/>`)}</button>
          <div class="inner">
            <div class="filters">
              <label class="search">${icon(18, 18, svg`<circle cx="7.500" cy="7.500" r="6" stroke="#c4c4c4" stroke-width="2.800"/><path d="m12 12 5 5" stroke="#c4c4c4" stroke-width="3.200"/>`)}<input type="search" aria-label="Search" placeholder="Search" /></label>
              <label class="pick org"><select aria-label="Organizations"><option>ORGANIZATIONS</option></select>${icon(9, 5, svg`<path d="M0 0h9L4.500 5z" fill="#222"/>`)}</label>
              <button class="map" aria-label="Map view">${icon(13, 13, svg`<path d="M.5 2.500 4 .800l5 1.700L12.500.800v10L9 12.500l-5-1.700-3.500 1.700zM4 1v10M9 2.500v10" stroke="#777" stroke-width="1.200"/>`)}</button>
            </div>
            <div class="strip"><button>VIEW COLUMN ${icon(12, 8, svg`<path d="m1 1 5 5 5-5" stroke="#222" stroke-width="2.200"/>`)}</button></div>
            <table class="list">
              <colgroup>${widths.map((w) => html`<col style="width:${w}px" />`)}</colgroup>
              <thead><tr>
                <th><input type="checkbox" aria-label="Select all" /></th>
                <th>Customer Code</th><th>Title</th><th>Customer Name</th>
                <th>${this.column("Customer Groups")}</th>
                <th>Street Address</th><th>Town</th><th>District</th>
                <th>${this.column("Province/ City", "under inset")}</th>
                <th>Address</th><th>Ship-To Code</th><th>Created At</th>
                <th class="status">${this.column("Validation Status", "")}</th>
              </tr></thead>
              <tbody>
                ${customers.map(([code, name, street, town, district, province, address, created]) => html`<tr>
                  <td><input type="checkbox" aria-label="Select ${code}" /></td>
                  <td>${code}</td><td></td><td><a class="link" href="#">${name}</a></td><td></td>
                  <td>${street}</td><td>${town}</td><td>${district}</td><td>${province}</td>
                  <td>${address}</td><td></td><td>${created}</td><td></td>
                </tr>`)}
              </tbody>
            </table>
          </div>
        </main>
      </div>`;
  }
}

/* ---------- page with the red call-outs ---------- */

@customElement("app-root")
export class AppRoot extends LitElement {
  static styles = css`
    :host { display: flex; flex-direction: column; min-height: 100vh; position: relative; overflow: hidden; background: #fff; }
    .marks { position: absolute; left: 0; top: 0; pointer-events: none; }
  `;

  render() {
    const boxes = [[403, 232, 174, 155], [587, 232, 235, 155], [5, 586, 145, 34], [206, 512, 116, 42], [271, 727, 138, 208]];
    return html`
      <excel-window></excel-window>
      <partners-app></partners-app>
      <svg class="marks" width="900" height="960" viewBox="0 0 900 960" fill="none" stroke="#ff0540" stroke-width="3" aria-hidden="true">
        <defs>
          <marker id="tip" markerUnits="userSpaceOnUse" markerWidth="20" markerHeight="16" refX="18" refY="7" orient="auto">
            <path d="M18 7 0 1l5 6-5 6z" fill="#ff0540" stroke="none" />
          </marker>
        </defs>
        ${boxes.map(([x, y, w, h]) => svg`<rect x=${x + 1.5} y=${y + 1.5} width=${w - 3} height=${h - 3} />`)}
        <path d="M311 725 475 388M316 727 690 390" stroke-width="2.500" />
        <path d="M311 725 478 381" stroke-width="1" marker-end="url(#tip)" />
        <path d="M316 727 696 384" stroke-width="1" marker-end="url(#tip)" />
      </svg>`;
  }
}
